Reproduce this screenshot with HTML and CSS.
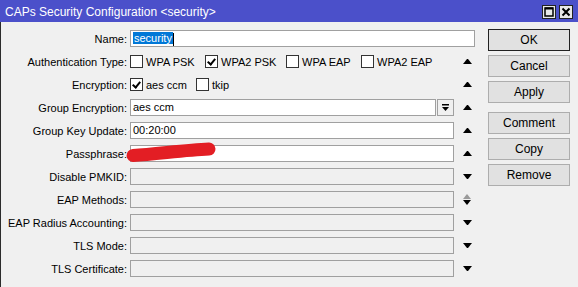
FILE: index.html
```html
<!DOCTYPE html>
<html lang="en">
<head>
    <meta charset="UTF-8">
    <title>CAPs Security Configuration</title>
    <link rel="stylesheet" href="styles.css">
</head>
<body>
    <div class="window">
        <div class="title-bar">
            <span class="title">CAPs Security Configuration &lt;security&gt;</span>
            <div class="title-controls">
                <div class="tbtn">
                    <svg width="12" height="12" viewBox="0 0 12 12"><rect x="2" y="2" width="8" height="8" fill="none" stroke="#000" stroke-width="1.5"/><line x1="2" y1="2.5" x2="10" y2="2.5" stroke="#000" stroke-width="2"/></svg>
                </div>
                <div class="tbtn">
                    <svg width="12" height="12" viewBox="0 0 12 12"><path d="M2.5 2.5 L9.5 9.5 M9.5 2.5 L2.5 9.5" stroke="#000" stroke-width="2"/></svg>
                </div>
            </div>
        </div>

        <div class="window-content">
            <div class="form">
                <div class="row">
                    <label class="lbl">Name:</label>
                    <div class="field wide"><span class="selected">security</span><span class="caret"></span></div>
                </div>

                <div class="row">
                    <label class="lbl">Authentication Type:</label>
                    <div class="checks">
                        <span class="opt w75"><span class="cb"></span>WPA PSK</span>
                        <span class="opt w81"><span class="cb checked"></span>WPA2 PSK</span>
                        <span class="opt w75"><span class="cb"></span>WPA EAP</span>
                        <span class="opt"><span class="cb"></span>WPA2 EAP</span>
                    </div>
                    <span class="arrow up"></span>
                </div>

                <div class="row">
                    <label class="lbl">Encryption:</label>
                    <div class="checks">
                        <span class="opt w66"><span class="cb checked"></span>aes ccm</span>
                        <span class="opt"><span class="cb"></span>tkip</span>
                    </div>
                    <span class="arrow up"></span>
                </div>

                <div class="row">
                    <label class="lbl">Group Encryption:</label>
                    <div class="combo">
                        <div class="field">aes ccm</div>
                        <div class="drop">
                            <svg width="9" height="9" viewBox="0 0 9 9"><rect x="1" y="1" width="7" height="1.5" fill="#000"/><path d="M1 4 H8 L4.5 8 Z" fill="#000"/></svg>
                        </div>
                    </div>
                    <span class="arrow up"></span>
                </div>

                <div class="row">
                    <label class="lbl">Group Key Update:</label>
                    <div class="field">00:20:00</div>
                    <span class="arrow up"></span>
                </div>

                <div class="row">
                    <label class="lbl">Passphrase:</label>
                    <div class="field"></div>
                    <span class="arrow up"></span>
                    <svg class="redact" viewBox="0 0 94 21"><path d="M8 13.5 C32 12, 60 8, 84 7" stroke="#e31e24" stroke-width="13" stroke-linecap="round" fill="none"/></svg>
                </div>

                <div class="row">
                    <label class="lbl">Disable PMKID:</label>
                    <div class="field off"></div>
                    <span class="arrow down"></span>
                </div>

                <div class="row">
                    <label class="lbl">EAP Methods:</label>
                    <div class="field off"></div>
                    <span class="arrow both"></span>
                </div>

                <div class="row">
                    <label class="lbl">EAP Radius Accounting:</label>
                    <div class="field off"></div>
                    <span class="arrow down"></span>
                </div>

                <div class="row">
                    <label class="lbl">TLS Mode:</label>
                    <div class="field off"></div>
                    <span class="arrow down"></span>
                </div>

                <div class="row">
                    <label class="lbl">TLS Certificate:</label>
                    <div class="field off"></div>
                    <span class="arrow down"></span>
                </div>
            </div>

            <div class="buttons">
                <button class="btn default">OK</button>
                <button class="btn">Cancel</button>
                <button class="btn">Apply</button>
                <button class="btn spaced">Comment</button>
                <button class="btn">Copy</button>
                <button class="btn">Remove</button>
            </div>
        </div>
    </div>
</body>
</html>
```

FILE: styles.css
```css
* {
    margin: 0;
    padding: 0;
    box-sizing: border-box;
    font-family: 'Liberation Sans', Arial, sans-serif;
}

body {
    width: 578px;
    height: 287px;
    background-color: #f0f0f0;
    overflow: hidden;
    font-size: 11px;
    color: #000;
}

.window {
    height: 287px;
    border-left: 1px solid #2b2b2b;
}

.title-bar {
    height: 22px;
    background-color: #4b50ca;
    display: flex;
    align-items: center;
    justify-content: space-between;
    padding: 0 5px 0 5px;
    margin-left: -1px;
}

.title {
    color: #fff;
    font-size: 12px;
    padding-top: 1px;
}

.title-controls {
    display: flex;
    gap: 3px;
    margin-top: 1px;
}

.tbtn {
    width: 14px;
    height: 14px;
    background-color: #e8e8e8;
    border: 1px solid #222;
    display: flex;
    align-items: center;
    justify-content: center;
}

.window-content {
    display: flex;
    padding-top: 5px;
}

.form {
    width: 471px;
}

.row {
    position: relative;
    display: grid;
    grid-template-columns: 126px 324px 18px;
    column-gap: 3px;
    height: 23px;
    align-items: center;
}

.lbl {
    text-align: right;
    white-space: nowrap;
}

.field {
    height: 17px;
    border: 1px solid #a0a0a0;
    background-color: #fff;
    padding: 0 2px;
    line-height: 15px;
    white-space: nowrap;
}

.field.wide {
    grid-column: 2 / span 2;
}

.field.off {
    background-color: #f0f0f0;
}

.selected {
    background-color: #0078d7;
    color: #fff;
    padding: 0 1px;
}

.caret {
    display: inline-block;
    width: 1px;
    height: 13px;
    background-color: #000;
    vertical-align: middle;
}

.checks {
    display: flex;
    align-items: center;
    height: 17px;
}

.opt {
    display: flex;
    align-items: center;
    gap: 3px;
}

.w75 { width: 75px; }
.w81 { width: 81px; }
.w66 { width: 66px; }

.cb {
    width: 13px;
    height: 13px;
    border: 1px solid #333;
    background-color: #fff;
    position: relative;
}

.cb.checked::after {
    content: "";
    position: absolute;
    left: 3px;
    top: 1px;
    width: 3px;
    height: 6px;
    border: solid #000;
    border-width: 0 2px 2px 0;
    transform: rotate(40deg);
}

.combo {
    display: flex;
    gap: 1px;
}

.combo .field {
    flex: 1;
}

.drop {
    width: 17px;
    height: 17px;
    border: 1px solid #a0a0a0;
    background-color: #f0f0f0;
    display: flex;
    align-items: center;
    justify-content: center;
}

.arrow {
    justify-self: center;
    width: 9px;
    height: 5px;
    position: relative;
    left: 1px;
}

.arrow.up {
    border-left: 4.5px solid transparent;
    border-right: 4.5px solid transparent;
    border-bottom: 5px solid #000;
}

.arrow.down {
    border-left: 4.5px solid transparent;
    border-right: 4.5px solid transparent;
    border-top: 5px solid #000;
}

.arrow.both {
    height: 11px;
}

.arrow.both::before,
.arrow.both::after {
    content: "";
    position: absolute;
    left: 0;
    border-left: 4.5px solid transparent;
    border-right: 4.5px solid transparent;
}

.arrow.both::before {
    top: 0;
    border-bottom: 5px solid #9a9a9a;
}

.arrow.both::after {
    top: 6px;
    border-top: 5px solid #000;
}

.redact {
    position: absolute;
    left: 124px;
    top: 0;
    width: 94px;
    height: 21px;
}

.buttons {
    display: flex;
    flex-direction: column;
    gap: 4px;
    margin-left: 16px;
    padding-top: 2px;
}

.btn {
    width: 82px;
    height: 22px;
    background-color: #e1e1e1;
    border: 1px solid #adadad;
    font-size: 12px;
    color: #000;
}

.btn.default {
    border-color: #222;
}

.btn.spaced {
    margin-top: 5px;
}
```
